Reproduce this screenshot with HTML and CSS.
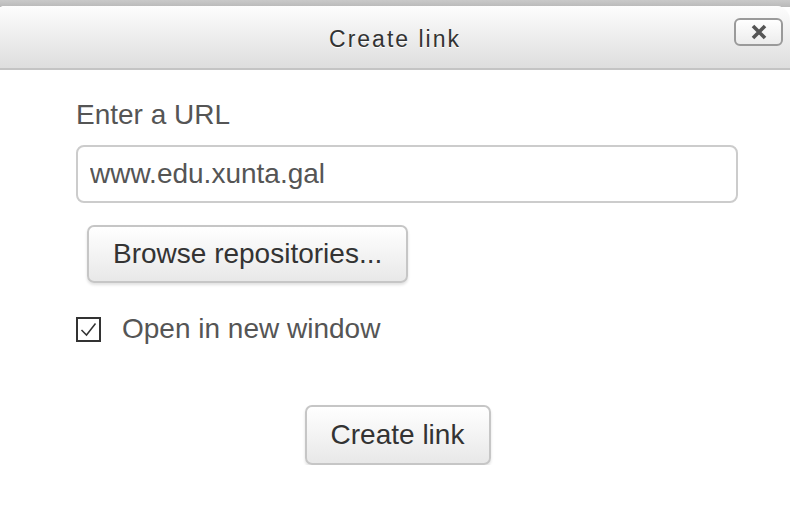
FILE: index.html
```html
<!DOCTYPE html>
<html>
<head>
<meta charset="utf-8">
<link rel="stylesheet" href="styles.css">
</head>
<body>
<div class="backdrop"></div>
<div class="dialog">
  <div class="header">
    <h1 class="title">Create link</h1>
    <button class="close" aria-label="Close">
      <svg width="22" height="16" viewBox="0 0 22 16"><path d="M5 2 L17 14 M17 2 L5 14" stroke="#555" stroke-width="3.6" stroke-linecap="butt" fill="none"/></svg>
    </button>
  </div>
  <div class="body">
    <label class="label" for="url">Enter a URL</label>
    <input id="url" class="input" type="text" value="www.edu.xunta.gal">
    <div class="browse-row">
      <button class="btn">Browse repositories...</button>
    </div>
    <label class="check-row">
      <span class="checkbox">
        <svg width="21" height="21" viewBox="0 0 21 21"><path d="M3.5 11 L8.5 16 L17.5 4.5" stroke="#333" stroke-width="1.5" fill="none"/></svg>
      </span>
      <span class="check-label">Open in new window</span>
    </label>
    <div class="submit-row">
      <button class="btn btn-submit">Create link</button>
    </div>
  </div>
</div>
</body>
</html>
```
FILE: styles.css
```css
html, body {
  margin: 0;
  padding: 0;
  background: #fff;
  font-family: "Liberation Sans", Arial, sans-serif;
}
.backdrop {
  height: 7px;
  background: linear-gradient(#c9c9c9, #b9b9b9);
}
.dialog {
  background: #fff;
  border-radius: 4px 14px 0 0;
  margin-top: -1px;
  width: 790px;
}
.header {
  position: relative;
  height: 62px;
  border-radius: 4px 14px 0 0;
  background: linear-gradient(#fdfdfd, #dedede);
  border-bottom: 2px solid #c4c4c4;
  display: flex;
  align-items: center;
  justify-content: center;
}
.title {
  margin: 0;
  padding-top: 4px;
  font-size: 23px;
  font-weight: normal;
  letter-spacing: 2px;
  color: #333;
  text-shadow: 0 1px 0 #fff;
}
.close {
  position: absolute;
  right: 7px;
  top: 12px;
  width: 49px;
  height: 28px;
  border: 2px solid #9a9a9a;
  border-radius: 6px;
  background: linear-gradient(#ffffff, #ececec);
  padding: 0;
  display: flex;
  align-items: center;
  justify-content: center;
}
.body {
  padding: 29px 52px 0 76px;
  display: flex;
  flex-direction: column;
}
.label {
  font-size: 28px;
  color: #555;
  line-height: 32px;
  margin-bottom: 14px;
}
.input {
  box-sizing: border-box;
  width: 662px;
  height: 58px;
  border: 2px solid #ccc;
  border-radius: 8px;
  padding: 0 12px;
  font-family: "Liberation Sans", Arial, sans-serif;
  font-size: 28px;
  color: #555;
  outline: none;
}
.browse-row {
  margin-top: 22px;
  padding-left: 11px;
}
.btn {
  box-sizing: border-box;
  height: 58px;
  padding: 0 24px;
  border: 2px solid #c6c6c6;
  border-radius: 7px;
  background: linear-gradient(#ffffff, #e8e8e8);
  box-shadow: 0 2px 3px rgba(0,0,0,0.12);
  font-family: "Liberation Sans", Arial, sans-serif;
  font-size: 28px;
  color: #333;
}
.check-row {
  margin-top: 30px;
  display: flex;
  align-items: center;
  gap: 21px;
}
.checkbox {
  box-sizing: border-box;
  width: 25px;
  height: 25px;
  border: 2px solid #333;
  display: flex;
  align-items: center;
  justify-content: center;
}
.check-label {
  font-size: 28px;
  line-height: 32px;
  color: #555;
}
.submit-row {
  margin-top: 60px;
  display: flex;
  justify-content: center;
  padding-right: 19px;
}
.btn-submit {
  width: 186px;
  height: 60px;
  padding: 0;
}
```
